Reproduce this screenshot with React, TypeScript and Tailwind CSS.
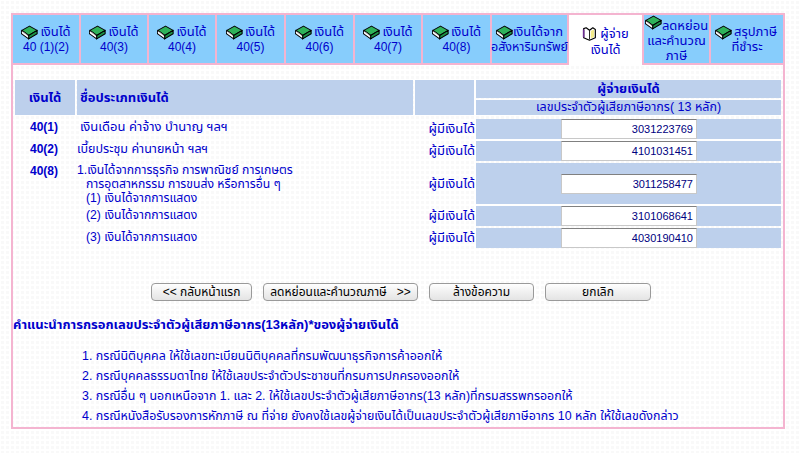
import React from "react";

const font = "font-['Liberation_Sans','Noto_Sans_Thai','Noto_Sans','DejaVu_Sans',sans-serif]";

const GreenBook = ({ className = "" }: { className?: string }) => (
  <svg viewBox="0 0 20 17" className={`w-[17px] h-[15px] shrink-0 ${className}`}>
    <path d="M1 6 L10 1 L19 6 L9 12 Z" fill="#2fb35a" stroke="#000" strokeWidth="1.2" strokeLinejoin="round" />
    <path d="M9 12 L19 6 L19 10 L9 16 Z" fill="#1c9146" stroke="#000" strokeWidth="1.2" strokeLinejoin="round" />
    <path d="M1 6 C0 8 0 10 2 11 L9 16 L9 12 Z" fill="#fff" stroke="#000" strokeWidth="1.2" strokeLinejoin="round" />
    <path d="M3 8 L8 12" stroke="#999" strokeWidth="1" />
  </svg>
);

const OpenBook = () => (
  <svg viewBox="0 0 18 17" className="w-[15px] h-[16px] shrink-0">
    <path d="M2 2 L2 13 L9 16 L16 13 L16 3 L13 1 L9 4 L5 1 Z" fill="#fff" stroke="#000" strokeWidth="1.4" strokeLinejoin="round" />
    <path d="M9 4 L9 15" stroke="#000" strokeWidth="1" />
    <path d="M10.5 5 L14.5 3 L14.5 12 L10.5 14 Z" fill="#f4ec8a" />
    <path d="M3 3 L3 13 L1 12 L1 3 Z" fill="#6b2c91" />
  </svg>
);

const tabs = [
  { w: "w-[66px]", bottom: "40 (1)(2)" },
  { w: "w-[66px]", bottom: "40(3)" },
  { w: "w-[66px]", bottom: "40(4)" },
  { w: "w-[67px]", bottom: "40(5)" },
  { w: "w-[67px]", bottom: "40(6)" },
  { w: "w-[66px]", bottom: "40(7)" },
  { w: "w-[67px]", bottom: "40(8)" },
];

const rows = [
  { h: "h-[20px]", value: "3031223769" },
  { h: "h-[20px]", value: "4101031451" },
  { h: "h-[41px]", value: "3011258477" },
  { h: "h-[20px]", value: "3101068641" },
  { h: "h-[20px]", value: "4030190410" },
];

const notes = [
  "1. กรณีนิติบุคคล ให้ใช้เลขทะเบียนนิติบุคคลที่กรมพัฒนาธุรกิจการค้าออกให้",
  "2. กรณีบุคคลธรรมดาไทย ให้ใช้เลขประจำตัวประชาชนที่กรมการปกครองออกให้",
  "3. กรณีอื่น ๆ นอกเหนือจาก 1. และ 2. ให้ใช้เลขประจำตัวผู้เสียภาษีอากร(13 หลัก)ที่กรมสรรพกรออกให้",
  "4. กรณีหนังสือรับรองการหักภาษี ณ ที่จ่าย ยังคงใช้เลขผู้จ่ายเงินได้เป็นเลขประจำตัวผู้เสียภาษีอากร 10 หลัก ให้ใช้เลขดังกล่าว",
];

const Button = ({ w, children }: { w: string; children: React.ReactNode }) => (
  <button className={`${w} h-[18px] rounded-[4px] border border-[#9a9a9a] bg-gradient-to-b from-white via-[#f0f0f0] to-[#e4e4e4] text-[12px] leading-none text-black whitespace-pre`}>
    {children}
  </button>
);

export default function App() {
  return (
    <div className={`${font} w-[801px] h-[453px] overflow-hidden bg-white bg-[radial-gradient(#f9f9f9_1.6px,transparent_1.7px)] bg-[length:5px_5px] pt-[13px] pl-[11px] text-[13px] text-[#0000cc]`}>
      <div className="w-[774px] h-[416px] border-2 border-[#f4b4d0]">
        {/* tabs */}
        <div className="flex gap-[2px] h-[50px] bg-[#f4b4d0]">
          {tabs.map((t) => (
            <div key={t.bottom} className={`${t.w} h-[48px] bg-[#87cdfc] flex flex-col items-center justify-center leading-[14px]`}>
              <div className="flex items-center gap-[2px]">
                <GreenBook />
                <span>เงินได้</span>
              </div>
              <span className="text-[12px]">{t.bottom}</span>
            </div>
          ))}
          <div className="w-[75px] h-[48px] bg-[#87cdfc] flex flex-col items-center justify-center leading-[14px] whitespace-nowrap">
            <div className="flex items-center">
              <GreenBook />
              <span>เงินได้จาก</span>
            </div>
            <span className="text-[12.5px]">อสังหาริมทรัพย์</span>
          </div>
          <div className="w-[73px] h-[50px] bg-white flex flex-col items-center justify-center pt-[2px] leading-[15px]">
            <div className="flex items-center gap-[3px]">
              <OpenBook />
              <span>ผู้จ่าย</span>
            </div>
            <span>เงินได้</span>
          </div>
          <div className="w-[65px] h-[48px] bg-[#87cdfc] flex flex-col items-center leading-[15px] whitespace-nowrap">
            <div className="flex items-start h-[18px]">
              <GreenBook />
              <span className="pt-[4px] leading-[14px]">ลดหย่อน</span>
            </div>
            <span>และคำนวณ</span>
            <span>ภาษี</span>
          </div>
          <div className="w-[72px] h-[48px] bg-[#87cdfc] flex flex-col items-center justify-center leading-[14px] whitespace-nowrap">
            <div className="flex items-center gap-[2px] -ml-[2px]">
              <GreenBook />
              <span>สรุปภาษี</span>
            </div>
            <span>ที่ชำระ</span>
          </div>
        </div>

        {/* income table */}
        <div className="flex mt-[15px] ml-[2px] gap-[2px] h-[35px] font-bold">
          <div className="w-[60px] bg-[#bdd0ec] flex items-center justify-center">เงินได้</div>
          <div className="w-[336px] bg-[#bdd0ec] flex items-center pl-[3px]">ชื่อประเภทเงินได้</div>
          <div className="w-[59px] bg-[#bdd0ec]" />
          <div className="w-[305px] flex flex-col gap-[2px] text-center">
            <div className="h-[18px] bg-[#bdd0ec] leading-[18px]">ผู้จ่ายเงินได้</div>
            <div className="h-[15px] bg-[#bdd0ec] leading-[15px] font-normal text-[12.5px]">เลขประจำตัวผู้เสียภาษีอากร( 13 หลัก)</div>
          </div>
        </div>

        <div className="flex mt-[4px] ml-[2px] gap-[2px]">
          <div className="w-[398px] shrink-0 flex">
            <div className="w-[62px] pl-[15px] font-bold leading-[14px] flex flex-col text-[12px]">
              <span className="h-[22px] pt-[1px]">40(1)</span>
              <span className="h-[22px] pt-[1px]">40(2)</span>
              <span className="pt-[1px]">40(8)</span>
            </div>
            <div className="flex-1 leading-[14px]">
              <p className="h-[22px] pl-[3px] pt-[1px]">เงินเดือน ค่าจ้าง บำนาญ ฯลฯ</p>
              <p className="h-[22px] pt-[1px] text-[12.5px]">เบี้ยประชุม ค่านายหน้า ฯลฯ</p>
              <div className="text-[12.2px]">
                <p>1.เงินได้จากการธุรกิจ การพาณิชย์ การเกษตร</p>
                <p className="pl-[9px] h-[14px]">การอุตสาหกรรม การขนส่ง หรือการอื่น ๆ</p>
                <p className="pl-[9px] h-[17px]">(1) เงินได้จากการแสดง</p>
                <p className="pl-[9px] h-[22px]">(2) เงินได้จากการแสดง</p>
                <p className="pl-[9px]">(3) เงินได้จากการแสดง</p>
              </div>
            </div>
          </div>
          <div className="flex-1 flex flex-col gap-[2px] pr-[2px]">
            {rows.map((r) => (
              <div key={r.value} className={`flex ${r.h}`}>
                <div className="w-[61px] flex items-center justify-end pr-[1px] whitespace-nowrap">ผู้มีเงินได้</div>
                <div className="w-[305px] bg-[#bdd0ec] flex items-center pl-[85px]">
                  <input
                    readOnly
                    value={r.value}
                    className="w-[136px] h-[20px] bg-white border border-[#c8c8c8] border-t-[#808080] text-right text-[11px] text-[#000080] pr-[3px] outline-none"
                  />
                </div>
              </div>
            ))}
          </div>
        </div>

        {/* action buttons */}
        <div className="flex mt-[35px] ml-[138px] gap-[11px]">
          <Button w="w-[101px]">{"<< กลับหน้าแรก"}</Button>
          <Button w="w-[155px]">{"ลดหย่อนและคำนวณภาษี   >>"}</Button>
          <Button w="w-[105px]">ล้างข้อความ</Button>
          <Button w="w-[106px]">ยกเลิก</Button>
        </div>

        <p className="mt-[17px] font-bold leading-[14px]">คำแนะนำการกรอกเลขประจำตัวผู้เสียภาษีอากร(13หลัก)*ของผู้จ่ายเงินได้</p>

        <div className="mt-[17px] pl-[69px] flex flex-col gap-[6px] leading-[14px] text-[12.4px]">
          {notes.map((n) => (
            <p key={n} className="whitespace-nowrap">{n}</p>
          ))}
        </div>
      </div>
    </div>
  );
}
